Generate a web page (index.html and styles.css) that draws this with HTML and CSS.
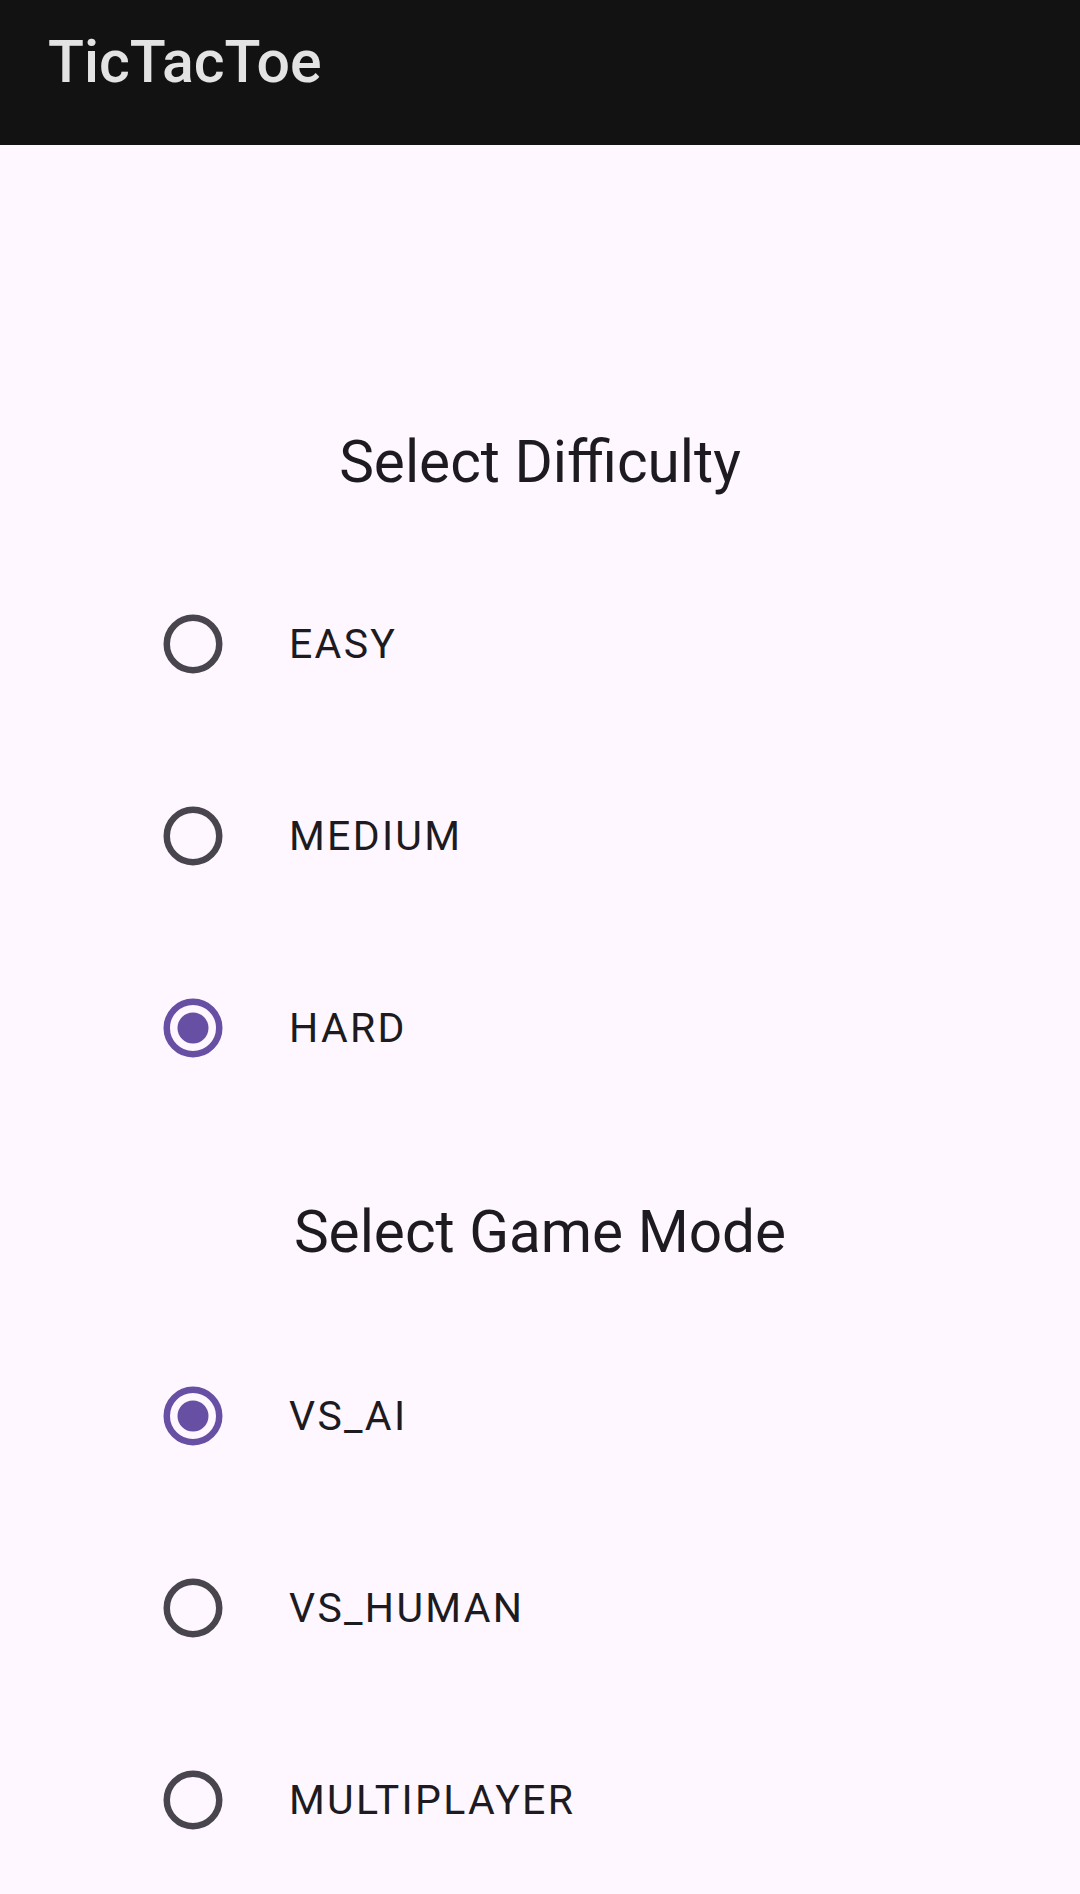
FILE: index.html
```html
<!DOCTYPE html>
<html>
<head>
<meta charset="utf-8">
<link rel="stylesheet" href="styles.css">
</head>
<body>
<header class="appbar"><span class="appbar-title">TicTacToe</span></header>
<main class="content">
  <h2 class="section-title first">Select Difficulty</h2>
  <div class="group">
    <div class="option"><svg class="radio" viewBox="0 0 60 60"><circle cx="30" cy="30" r="26.25" class="ring off"/></svg><span class="label">EASY</span></div>
    <div class="option"><svg class="radio" viewBox="0 0 60 60"><circle cx="30" cy="30" r="26.25" class="ring off"/></svg><span class="label">MEDIUM</span></div>
    <div class="option"><svg class="radio" viewBox="0 0 60 60"><circle cx="30" cy="30" r="26.25" class="ring on"/><circle cx="30" cy="30" r="15.5" class="dot"/></svg><span class="label">HARD</span></div>
  </div>
  <h2 class="section-title second">Select Game Mode</h2>
  <div class="group">
    <div class="option"><svg class="radio" viewBox="0 0 60 60"><circle cx="30" cy="30" r="26.25" class="ring on"/><circle cx="30" cy="30" r="15.5" class="dot"/></svg><span class="label">VS_AI</span></div>
    <div class="option"><svg class="radio" viewBox="0 0 60 60"><circle cx="30" cy="30" r="26.25" class="ring off"/></svg><span class="label">VS_HUMAN</span></div>
    <div class="option"><svg class="radio" viewBox="0 0 60 60"><circle cx="30" cy="30" r="26.25" class="ring off"/></svg><span class="label">MULTIPLAYER</span></div>
  </div>
</main>
</body>
</html>
```

FILE: styles.css
```css
html, body {
  margin: 0;
  padding: 0;
}
body {
  background: #fef7ff;
  font-family: Roboto, "Noto Sans", sans-serif;
  color: #1d1b20;
  width: 1080px;
  height: 1894px;
  overflow: hidden;
}
.appbar {
  height: 145px;
  background: #121212;
  display: flex;
  align-items: flex-start;
  padding-left: 48px;
  box-sizing: border-box;
}
.appbar-title {
  color: #e3e3e3;
  font-size: 59px;
  font-weight: 500;
  line-height: 70px;
  margin-top: 27px;
}
.content {
  display: flex;
  flex-direction: column;
}
.section-title {
  margin: 0;
  font-size: 58.5px;
  font-weight: 400;
  line-height: 70px;
  text-align: center;
}
.section-title.first {
  margin-top: 282px;
  margin-bottom: 51px;
}
.section-title.second {
  margin-top: 73px;
  margin-bottom: 53px;
}
.group {
  display: flex;
  flex-direction: column;
}
.option {
  height: 192px;
  display: flex;
  align-items: center;
  padding-left: 163px;
}
.radio {
  width: 60px;
  height: 60px;
  flex: none;
}
.ring {
  fill: none;
  stroke-width: 6.5;
}
.ring.off {
  stroke: #49454f;
}
.ring.on {
  stroke: #6750a4;
}
.dot {
  fill: #6750a4;
}
.label {
  margin-left: 66px;
  font-size: 41px;
  letter-spacing: 2.3px;
  line-height: 48px;
}
```
